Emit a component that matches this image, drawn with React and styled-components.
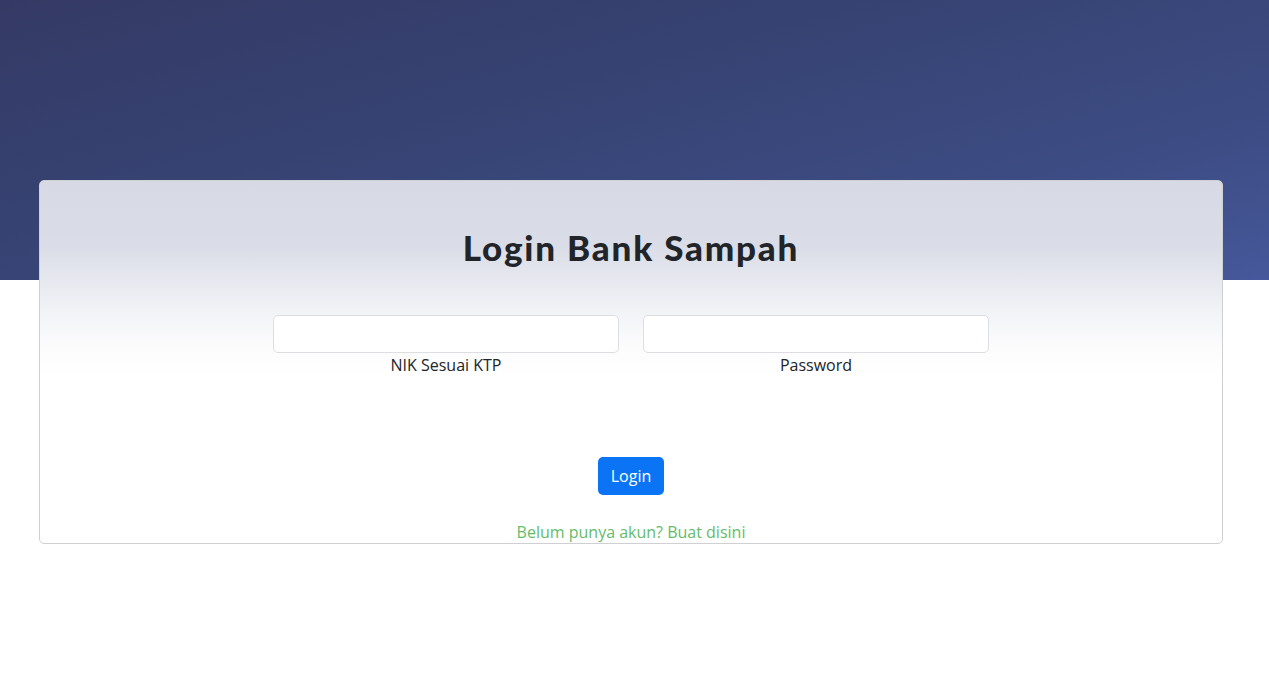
import React, { useState } from 'react';
import styled, { createGlobalStyle } from 'styled-components';

const GlobalStyle = createGlobalStyle`
  body {
    margin: 0;
    font-family: "Open Sans", "Liberation Sans", sans-serif;
    background: #fff;
    color: #212529;
  }
`;

const Page = styled.div`
  position: relative;
  min-height: 677px;
`;

const Banner = styled.div`
  height: 280px;
  background: linear-gradient(165deg, #353a65 0%, #364373 40%, #3d4c84 75%, #46589b 100%);
`;

const Card = styled.div`
  position: absolute;
  top: 180px;
  left: 39px;
  width: 1184px;
  height: 364px;
  box-sizing: border-box;
  border: 1px solid #cfd0d3;
  border-radius: 5px;
  background: linear-gradient(to bottom, #d7dae4 0%, #dadde7 18%, #f1f2f6 35%, #fcfcfd 46%, #ffffff 55%, #ffffff 100%);
  display: flex;
  flex-direction: column;
  align-items: center;
  padding-top: 45px;
`;

const Title = styled.h2`
  margin: 0;
  font-family: "Lato", "Liberation Sans", sans-serif;
  font-weight: 900;
  font-size: 35px;
  line-height: 42px;
  color: #212529;
  letter-spacing: 1.8px;
`;

const Form = styled.form`
  display: flex;
  flex-direction: column;
  align-items: center;
  margin-top: 47px;
`;

const Fields = styled.div`
  display: flex;
  gap: 24px;
`;

const Field = styled.label`
  display: flex;
  flex-direction: column;
  align-items: center;
  width: 346px;
  font-size: 16px;
  line-height: 24px;
  color: #212529;
`;

const Input = styled.input`
  width: 100%;
  height: 38px;
  box-sizing: border-box;
  padding: 6px 12px;
  border: 1px solid #dcdee1;
  border-radius: 5px;
  background: #fff;
  font-size: 16px;
  outline: none;
`;

const Button = styled.button`
  margin-top: 80px;
  height: 38px;
  padding: 0 13px;
  border: none;
  border-radius: 5px;
  background: #0a74f5;
  color: #fff;
  font-family: "Open Sans", "Liberation Sans", sans-serif;
  font-size: 16px;
  cursor: pointer;
`;

const SignUp = styled.a`
  margin-top: 25px;
  font-size: 16px;
  line-height: 24px;
  color: #63bc6a;
  text-decoration: none;
  cursor: pointer;
`;

const App = () => {
  const [nik, setNik] = useState('');
  const [password, setPassword] = useState('');

  return (
    <Page>
      <GlobalStyle />
      <Banner />
      <Card>
        <Title>Login Bank Sampah</Title>
        <Form onSubmit={(e) => e.preventDefault()}>
          <Fields>
            <Field>
              <Input type="text" value={nik} onChange={(e) => setNik(e.target.value)} />
              NIK Sesuai KTP
            </Field>
            <Field>
              <Input type="password" value={password} onChange={(e) => setPassword(e.target.value)} />
              Password
            </Field>
          </Fields>
          <Button type="submit">Login</Button>
        </Form>
        <SignUp>Belum punya akun? Buat disini</SignUp>
      </Card>
    </Page>
  );
};

export default App;
